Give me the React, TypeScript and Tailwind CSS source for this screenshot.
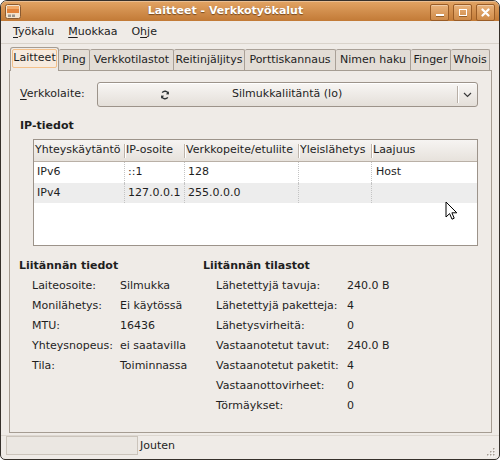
import React from 'react';

const tabs = [
  { label: 'Laitteet', w: 49 },
  { label: 'Ping', w: 31 },
  { label: 'Verkkotilastot', w: 84 },
  { label: 'Reitinjäljitys', w: 71 },
  { label: 'Porttiskannaus', w: 91 },
  { label: 'Nimen haku', w: 75 },
  { label: 'Finger', w: 40 },
  { label: 'Whois', w: 39 },
];

const columns = [
  { label: 'Yhteyskäytäntö', w: 91 },
  { label: 'IP-osoite', w: 60 },
  { label: 'Verkkopeite/etuliite', w: 114 },
  { label: 'Yleislähetys', w: 73 },
  { label: 'Laajuus', w: 105 },
];

const rows = [
  ['IPv6', '::1', '128', '', 'Host'],
  ['IPv4', '127.0.0.1', '255.0.0.0', '', ''],
];

const ifaceInfo = [
  ['Laiteosoite:', 'Silmukka'],
  ['Monilähetys:', 'Ei käytössä'],
  ['MTU:', '16436'],
  ['Yhteysnopeus:', 'ei saatavilla'],
  ['Tila:', 'Toiminnassa'],
];

const ifaceStats = [
  ['Lähetettyjä tavuja:', '240.0 B'],
  ['Lähetettyjä paketteja:', '4'],
  ['Lähetysvirheitä:', '0'],
  ['Vastaanotetut tavut:', '240.0 B'],
  ['Vastaanotetut paketit:', '4'],
  ['Vastaanottovirheet:', '0'],
  ['Törmäykset:', '0'],
];

function TitleButton({ children }: { children: React.ReactNode }) {
  return (
    <div className="w-[19px] h-[17px] rounded-[2px] border border-[#9a5c26] bg-linear-to-b from-[#e9b27a] to-[#cf8b48] shadow-[inset_0_1px_0_rgba(255,255,255,0.35)] flex items-center justify-center">
      {children}
    </div>
  );
}

function AppIcon() {
  return (
    <svg width="16" height="15" viewBox="0 0 16 15">
      <rect x="0.5" y="0.5" width="15" height="14" rx="2" fill="#f4e2cc" stroke="#8a5a30" />
      <rect x="2" y="2" width="12" height="7" fill="#e2823a" />
      <rect x="2" y="2" width="12" height="3" fill="#f0a867" />
      <rect x="3" y="10.5" width="3" height="2.5" fill="#9a948c" />
      <rect x="7" y="10.5" width="3" height="2.5" fill="#9a948c" />
    </svg>
  );
}

function RefreshIcon() {
  return (
    <svg width="10" height="10" viewBox="0 0 10 10" fill="none">
      <path d="M8.3 3.6A3.5 3.5 0 0 0 2.2 2.6" stroke="#2e3436" strokeWidth="1.4" />
      <path d="M8.9 1.2L8.9 4.4L5.8 4.2Z" fill="#2e3436" />
      <path d="M1.7 6.4A3.5 3.5 0 0 0 7.8 7.4" stroke="#2e3436" strokeWidth="1.4" />
      <path d="M1.1 8.8L1.1 5.6L4.2 5.8Z" fill="#2e3436" />
    </svg>
  );
}

function Cursor() {
  return (
    <svg width="13" height="20" viewBox="0 0 13 20" className="absolute left-[444px] top-[200px]">
      <path
        d="M1 1L1 16L4.6 12.6L7 18.2L9.2 17.2L6.9 11.8L11.8 11.8Z"
        fill="#ffffff"
        stroke="#000000"
        strokeWidth="1"
        strokeLinejoin="round"
      />
    </svg>
  );
}

function Grip() {
  const dots: [number, number][] = [
    [9, 1], [6, 4], [9, 4], [3, 7], [6, 7], [9, 7],
  ];
  return (
    <svg width="11" height="10" viewBox="0 0 11 10" className="mr-[4px] mb-[2px]">
      {dots.map(([x, y], i) => (
        <g key={i}>
          <rect x={x + 1} y={y + 1} width="1.5" height="1.5" fill="#ffffff" />
          <rect x={x} y={y} width="1.5" height="1.5" fill="#a59d94" />
        </g>
      ))}
    </svg>
  );
}

export default function App() {
  return (
    <div className="relative w-[500px] h-[460px] flex flex-col bg-[#efebe7] border border-[#35302b] rounded-t-[7px] rounded-b-[5px] overflow-hidden font-['DejaVu_Sans',sans-serif] text-[11px] text-[#1e1e1e]">
      {/* title bar */}
      <div className="relative h-[20px] shrink-0 flex items-center bg-linear-to-b from-[#e2a464] to-[#c27a36] shadow-[inset_0_1px_0_rgba(255,255,255,0.3)]">
        <div className="ml-[4px] mt-[1px]">
          <AppIcon />
        </div>
        <div className="flex-1 text-center font-bold text-white text-[11px] [text-shadow:0_1px_1px_rgba(60,30,0,0.6)]">
          Laitteet - Verkkotyökalut
        </div>
        <div className="flex gap-[4px] mr-[4px] mt-[2px]">
          <TitleButton>
            <div className="w-[8px] h-[2px] bg-white mt-[6px] shadow-[0_1px_0_rgba(90,45,0,0.5)]" />
          </TitleButton>
          <TitleButton>
            <div className="w-[8px] h-[7px] border-[1.5px] border-white shadow-[0_1px_0_rgba(90,45,0,0.5)]" />
          </TitleButton>
          <TitleButton>
            <svg width="9" height="9" viewBox="0 0 9 9">
              <path d="M1.5 1.5L7.5 7.5M7.5 1.5L1.5 7.5" stroke="#ffffff" strokeWidth="2.2" strokeLinecap="round" />
            </svg>
          </TitleButton>
        </div>
      </div>

      {/* menu bar */}
      <div className="h-[23px] shrink-0 flex items-center pl-[12px] gap-[14px] border-b border-[#d9d3cb]">
        <span>
          <span className="underline underline-offset-2">T</span>yökalu
        </span>
        <span>
          <span className="underline underline-offset-2">M</span>uokkaa
        </span>
        <span>
          O<span className="underline underline-offset-2">h</span>je
        </span>
      </div>

      {/* notebook */}
      <div className="ml-[8px] w-[483px] mt-[3px] shrink-0">
        <div className="relative z-10 h-[24px] -mb-px flex items-end pl-[1px]">
          {tabs.map((t, i) =>
            i === 0 ? (
              <div
                key={t.label}
                style={{ width: t.w }}
                className="h-[24px] rounded-t-[3px] border border-b-0 border-[#a59c92] bg-[#efebe7] px-[1px] pt-[1px]"
              >
                <div className="h-[19px] rounded-[2px] border border-[#f3c08a] bg-[#f7ebdf] flex items-center justify-center">
                  {t.label}
                </div>
              </div>
            ) : (
              <div
                key={t.label}
                style={{ width: t.w }}
                className="h-[21px] mb-[1px] rounded-t-[2px] border-t border-r border-[#a9a097] bg-[#e3ddd6] flex items-center justify-center"
              >
                {t.label}
              </div>
            )
          )}
        </div>

        <div className="h-[363px] border border-[#a59c92] bg-[#efebe7] flex flex-col">
          {/* device selector */}
          <div className="mt-[11px] pl-[10px] flex items-center">
            <div className="w-[77px]">
              <span className="underline underline-offset-2">V</span>erkkolaite:
            </div>
            <div className="w-[381px] h-[25px] rounded-[3px] border border-[#9c938a] bg-linear-to-b from-[#f8f6f4] to-[#e4dfd9] shadow-[inset_0_1px_0_#ffffff] flex items-center">
              <div className="ml-[62px] mt-[1px]">
                <RefreshIcon />
              </div>
              <div className="ml-[62px] flex-1">Silmukkaliitäntä (lo)</div>
              <div className="w-[1px] h-[17px] bg-[#b8afa6] shadow-[1px_0_0_#ffffff]" />
              <div className="w-[19px] flex justify-center">
                <svg width="9" height="6" viewBox="0 0 9 6">
                  <path d="M1 1L4.5 4.5L8 1" stroke="#3a3a3a" strokeWidth="1.2" fill="none" />
                </svg>
              </div>
            </div>
          </div>

          {/* IP table */}
          <div className="mt-[11px] pl-[10px] font-bold leading-[16px]">IP-tiedot</div>
          <div className="mt-[5px] ml-[23px] w-[445px] h-[107px] border border-[#9c938a] bg-white flex flex-col">
            <div className="h-[22px] flex bg-linear-to-b from-[#f6f4f2] to-[#e7e2dc] border-b border-[#b9b0a6]">
              {columns.map((c, i) => (
                <div key={c.label} style={{ width: c.w }} className="flex items-center">
                  <span className="flex-1 pl-[1px] whitespace-nowrap">{c.label}</span>
                  {i < columns.length - 1 && (
                    <div className="w-[1px] h-[14px] bg-[#bdb4ab] shadow-[1px_0_0_#ffffff]" />
                  )}
                </div>
              ))}
            </div>
            {rows.map((r, ri) => (
              <div
                key={ri}
                className={ri === 0 ? 'h-[21px] flex bg-white' : 'h-[20px] flex bg-[#ededed]'}
              >
                {r.map((v, ci) => (
                  <div
                    key={ci}
                    style={{ width: columns[ci].w }}
                    className={
                      ci < r.length - 1
                        ? 'flex items-center pl-[3px] border-r border-dotted border-[#c4c4c4]'
                        : 'flex items-center pl-[4px]'
                    }
                  >
                    {v}
                  </div>
                ))}
              </div>
            ))}
          </div>

          {/* interface details */}
          <div className="mt-[10px] flex leading-[20px]">
            <div className="w-[193px] pl-[9px]">
              <div className="font-bold">Liitännän tiedot</div>
              {ifaceInfo.map(([k, v]) => (
                <div key={k} className="flex pl-[13px]">
                  <span className="w-[88px]">{k}</span>
                  <span>{v}</span>
                </div>
              ))}
            </div>
            <div>
              <div className="font-bold">Liitännän tilastot</div>
              {ifaceStats.map(([k, v]) => (
                <div key={k} className="flex pl-[13px]">
                  <span className="w-[131px]">{k}</span>
                  <span>{v}</span>
                </div>
              ))}
            </div>
          </div>
        </div>
      </div>

      {/* status bar */}
      <div className="flex-1 mt-[2px] border-t border-[#ddd7d0] flex items-start">
        <div className="ml-[5px] w-[132px] h-[19px] border border-[#cbc4bb] bg-[#ebe7e2]" />
        <div className="ml-[2px] leading-[19px] flex-1">Jouten</div>
        <div className="self-end">
          <Grip />
        </div>
      </div>

      <Cursor />
    </div>
  );
}
